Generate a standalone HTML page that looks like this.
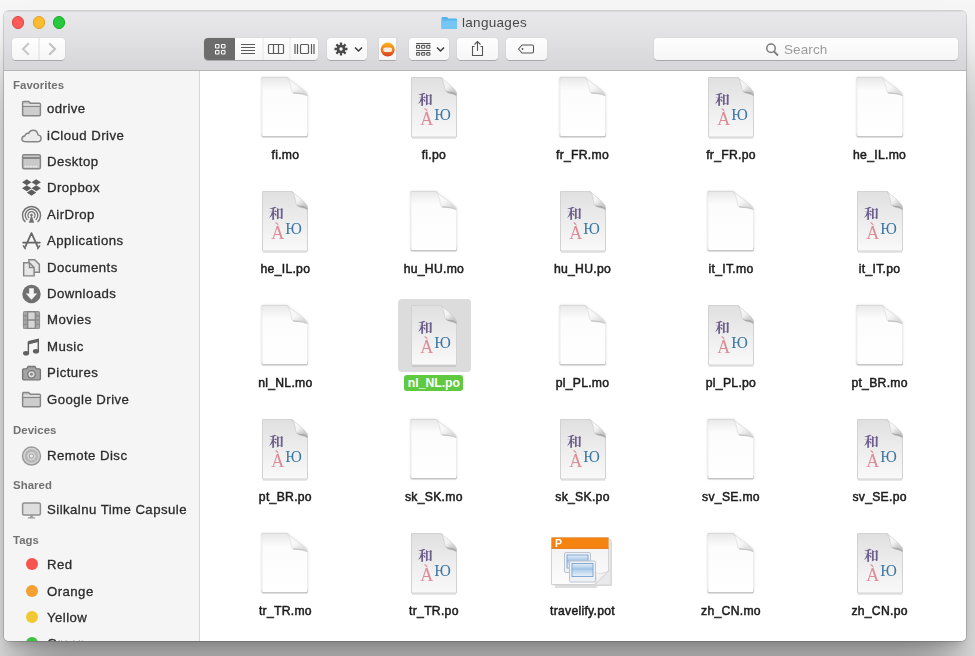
<!DOCTYPE html>
<html><head><meta charset="utf-8"><title>languages</title>
<style>
*{box-sizing:border-box;margin:0;padding:0}
html,body{width:975px;height:656px;overflow:hidden}
body{background:#f6f6f6;font-family:"Liberation Sans","Noto Sans CJK SC",sans-serif;position:relative;color:#2a2a2a}
#shade{position:absolute;left:0;top:0;width:975px;height:656px;background:#f6f6f6}
#win{position:absolute;left:4px;top:11px;width:962px;height:630px;border-radius:5px;background:#fff;transform:translateZ(0);box-shadow:0 0 0 1px rgba(0,0,0,.15),0 8px 10px -4px rgba(0,0,0,.17),0 55px 60px rgba(0,0,0,.38);overflow:hidden}
#tb{position:absolute;left:0;top:0;width:962px;height:60px;background:linear-gradient(#e8e7e9,#e1e0e2 45%,#d6d5d7);border-bottom:1px solid #b6b6b6;box-shadow:inset 0 1px 0 rgba(0,0,0,.06)}
.tl{position:absolute;top:5px;width:12.6px;height:12.6px;border-radius:50%}
#title{position:absolute;left:458px;top:4px;height:16px;font-size:13.5px;line-height:16px;color:#484848;letter-spacing:.3px}
.btn{position:absolute;top:27px;height:22px;background:linear-gradient(#fefefe,#f6f6f6);border-radius:4px;box-shadow:0 1px .5px rgba(0,0,0,.2),0 0 0 .5px rgba(0,0,0,.05)}
.btn svg{position:absolute;left:0;top:0}
#side{position:absolute;left:0;top:60px;width:196px;height:570px;background:#f5f5f5;border-right:1px solid #d6d6d6}
.sh{position:absolute;left:9px;font-size:11.4px;font-weight:bold;color:#717171;line-height:14px;letter-spacing:.05px}
.si{position:absolute;left:43px;font-size:13.2px;line-height:18px;color:#2c2c2c;white-space:nowrap;letter-spacing:.45px;-webkit-text-stroke:.3px #2c2c2c}
.sic{position:absolute;left:16px;width:23px;height:21px}
.dot{position:absolute;left:22px;width:12px;height:12px;border-radius:50%}
#main{position:absolute;left:197px;top:60px;width:765px;height:570px;background:#fff}
.it{position:absolute;width:120px;height:100px}
.ic{position:absolute;left:0;top:0;width:120px;height:70px}
.doc{position:absolute;left:32px;top:-3px}
.bl{filter:drop-shadow(0 .5px 1.2px rgba(0,0,0,.13))}
.pot{position:absolute;left:27px;top:2px}
.lb{position:absolute;left:-20px;width:160px;top:71px;text-align:center;font-size:12.2px;line-height:16px;color:#1c1c1c;white-space:nowrap;letter-spacing:.28px}
.lb span{padding:0 3px;border-radius:3px;display:inline-block;-webkit-text-stroke:.5px #1c1c1c}
.sel .ic:before{content:"";position:absolute;left:24px;top:-5px;width:73px;height:73px;background:#dcdcdc;border-radius:4px}
.sel .lb span{background:#5fc93f;color:#fff;font-weight:bold;-webkit-text-stroke:0;letter-spacing:0;padding:0 3.5px}
</style></head><body>
<div id="shade"></div>
<div id="win">
 <div id="tb">
  <div class="tl" style="left:7.5px;background:#fc5b57;border:.5px solid #e0443e"></div>
  <div class="tl" style="left:28.5px;background:#fdbc2e;border:.5px solid #dea123"></div>
  <div class="tl" style="left:48.5px;background:#27c93f;border:.5px solid #1aab29"></div>
  <svg width="17" height="14" viewBox="0 0 17 14" style="position:absolute;left:437px;top:5px"><path d="M.5 2 Q.5 1 1.5 1 H6 L7.5 2.5 H15 Q16 2.5 16 3.5 V12 Q16 13 15 13 H1.5 Q.5 13 .5 12Z" fill="#55b4ec"/><path d="M.5 4.5 H16 V12 Q16 13 15 13 H1.5 Q.5 13 .5 12Z" fill="#74c6f5"/></svg><div id="title">languages</div>
  <!-- back/forward -->
  <div class="btn" style="left:8px;width:53px"><svg width="53" height="22"><path d="M27 0V22" stroke="#dcdcdc" stroke-width="1"/><path d="M16.8 5.2 L11 11 L16.8 16.8" fill="none" stroke="#c6c6c6" stroke-width="2"/><path d="M37.2 5.2 L43 11 L37.2 16.8" fill="none" stroke="#c0c0c0" stroke-width="2"/></svg></div>
  <!-- view buttons -->
  <div class="btn" style="left:200px;width:114px"><svg width="114" height="22">
   <path d="M4 0 H31 V22 H4 Q0 22 0 18 V4 Q0 0 4 0Z" fill="#6c6c6c"/>
   <g fill="none" stroke="#fff" stroke-width="1.1"><rect x="11.5" y="6.5" width="3.5" height="3.5" rx=".8"/><rect x="17.5" y="6.5" width="3.5" height="3.5" rx=".8"/><rect x="11.5" y="12.5" width="3.5" height="3.5" rx=".8"/><rect x="17.5" y="12.5" width="3.5" height="3.5" rx=".8"/></g>
   <path d="M59 0V22M86 0V22" stroke="#e6e6e6" stroke-width="1"/>
   <g stroke="#5a5a5a" stroke-width="1.1"><path d="M37 6.5H51M37 9.5H51M37 12.5H51M37 15.5H51"/></g>
   <g fill="none" stroke="#5a5a5a" stroke-width="1.2"><rect x="64.5" y="6.5" width="15" height="9" rx="1"/><path d="M69.5 6.5V15.5M74.5 6.5V15.5"/></g>
   <g fill="none" stroke="#5a5a5a" stroke-width="1.2"><rect x="96.5" y="6.5" width="8" height="9" rx="1"/><path d="M91 6V16M93.5 6V16M107.5 6V16M110 6V16"/></g>
  </svg></div>
  <!-- gear -->
  <div class="btn" style="left:323px;width:40px"><svg width="40" height="22">
   <g transform="translate(14,11)" fill="#4a4a4a"><circle r="4.3"/><g stroke="#4a4a4a" stroke-width="2.3"><path d="M0-6.5V6.5M-6.5 0H6.5M-4.6-4.6L4.6 4.6M-4.6 4.6L4.6-4.6"/></g><circle r="1.7" fill="#fafafa"/></g>
   <path d="M28 9.5 L31.5 13 L35 9.5" fill="none" stroke="#3c3c3c" stroke-width="1.5"/>
  </svg></div>
  <!-- orange -->
  <div class="btn" style="left:375px;width:17px;border-radius:1px"><svg width="17" height="22"><defs><linearGradient id="og" x1="0" y1="0" x2="0" y2="1"><stop offset="0" stop-color="#f7b51f"/><stop offset=".5" stop-color="#ee7d1c"/><stop offset="1" stop-color="#d63e1b"/></linearGradient></defs><circle cx="8.7" cy="11.6" r="7" fill="url(#og)"/><rect x="4.2" y="9.4" width="9" height="4.6" rx="2.2" fill="#fbeee0"/></svg></div>
  <!-- arrange -->
  <div class="btn" style="left:405px;width:40px"><svg width="40" height="22">
   <g fill="none" stroke="#555" stroke-width="1.1"><path d="M7 5.5H21.5M7 12.5H21.5"/><rect x="7.5" y="7.4" width="3.2" height="2.8" rx=".7"/><rect x="12.6" y="7.4" width="3.2" height="2.8" rx=".7"/><rect x="17.7" y="7.4" width="3.2" height="2.8" rx=".7"/><rect x="7.5" y="14.6" width="3.2" height="2.6" rx=".7"/><rect x="12.6" y="14.6" width="3.2" height="2.6" rx=".7"/><rect x="17.7" y="14.6" width="3.2" height="2.6" rx=".7"/></g>
   <path d="M28 9.5 L31.5 13 L35 9.5" fill="none" stroke="#3c3c3c" stroke-width="1.5"/>
  </svg></div>
  <!-- share -->
  <div class="btn" style="left:453px;width:41px"><svg width="41" height="22"><g fill="none" stroke="#555" stroke-width="1.1"><path d="M17.5 8.5H15.5V17.5H25.5V8.5H23.5"/><path d="M20.5 13V3.5M17.5 6.5L20.5 3.5L23.5 6.5"/></g></svg></div>
  <!-- tag -->
  <div class="btn" style="left:502px;width:41px"><svg width="41" height="22"><path d="M12.5 11 L16 7 H26 Q27.5 7 27.5 8.5 V13.5 Q27.5 15 26 15 H16 Z" fill="none" stroke="#555" stroke-width="1.1" stroke-linejoin="round"/><circle cx="16.5" cy="11" r=".9" fill="#555"/></svg></div>
  <!-- search -->
  <div class="btn" style="left:650px;width:304px"><svg width="304" height="22"><circle cx="117" cy="10.3" r="4.2" fill="none" stroke="#7c7c7c" stroke-width="1.5"/><path d="M120 13.5L124 17.5" stroke="#7c7c7c" stroke-width="1.8"/></svg><span style="position:absolute;left:130px;top:4px;font-size:13.5px;line-height:16px;color:#9c9c9c;letter-spacing:.1px">Search</span></div>
 </div>

 <div id="side">
<div class="sh" style="top:6.5px">Favorites</div>
<svg class="sic" style="top:27.1px" viewBox="0 0 22 20"><path d="M2.5 4.3 Q2.5 3.3 3.5 3.3 H8.3 L10 5 H18.5 Q19.5 5 19.5 6 V16 Q19.5 17 18.5 17 H3.5 Q2.5 17 2.5 16Z" fill="#cdcdcd" stroke="#868686" stroke-width="1.4"/><path d="M2.5 8H19.5" stroke="#868686" stroke-width="1.3"/><path d="M3.3 5.8H18.7V7.3H3.3Z" fill="#e0e0e0"/></svg><div class="si" style="top:29.1px">odrive</div>
<svg class="sic" style="top:53.5px" viewBox="0 0 22 20"><path d="M6.5 16 H16.5 Q20.2 16 20.2 12.6 Q20.2 9.7 17.2 9.4 Q16.6 5 12.5 5 Q9.4 5 8.2 8 Q5.4 7.6 4.8 10.2 Q1.8 10.8 1.8 13.3 Q1.8 16 6.5 16Z" fill="#ececec" stroke="#868686" stroke-width="1.4"/></svg><div class="si" style="top:55.5px">iCloud Drive</div>
<svg class="sic" style="top:79.9px" viewBox="0 0 22 20"><rect x="2.5" y="3.6" width="17" height="13.4" rx="1.4" fill="#c9c9c9" stroke="#868686" stroke-width="1.4"/><path d="M2.5 6.6H19.5" stroke="#868686" stroke-width="2"/><path d="M4.5 14.8H17.5" stroke="#f0f0f0" stroke-width="1.4" stroke-dasharray="1.6 1"/></svg><div class="si" style="top:81.9px">Desktop</div>
<svg class="sic" style="top:106.3px" viewBox="0 0 22 20"><g fill="#5c5c5c"><path d="M6.5 2 L11 4.9 L6.5 7.8 L2 4.9Z"/><path d="M15.5 2 L20 4.9 L15.5 7.8 L11 4.9Z"/><path d="M6.5 7.8 L11 10.7 L6.5 13.6 L2 10.7Z"/><path d="M15.5 7.8 L20 10.7 L15.5 13.6 L11 10.7Z"/><path d="M6.5 14.9 L11 12 L15.5 14.9 L11 17.8Z"/></g></svg><div class="si" style="top:108.3px">Dropbox</div>
<svg class="sic" style="top:132.7px" viewBox="0 0 22 20"><g fill="none" stroke="#737373"><path d="M5.2 17.2 A8.6 8.6 0 1 1 16.8 17.2" stroke-width="1.4"/><path d="M7 15.2 A6 6 0 1 1 15 15.2" stroke-width="1.3"/><path d="M8.8 13.3 A3.4 3.4 0 1 1 13.2 13.3" stroke-width="1.2"/></g><path d="M11 10.2 L13.6 17.8 H8.4Z" fill="#737373"/><circle cx="11" cy="10.5" r="1.3" fill="#737373"/></svg><div class="si" style="top:134.7px">AirDrop</div>
<svg class="sic" style="top:159.1px" viewBox="0 0 22 20"><g fill="none" stroke="#666" stroke-width="1.7" stroke-linecap="round"><path d="M11 3 L5 16M11 3 L17 16M3 12 H19"/><path d="M3.2 15.2 L5 17.8M18.8 15.2 L17 17.8" stroke-width="1.4"/></g></svg><div class="si" style="top:161.1px">Applications</div>
<svg class="sic" style="top:185.5px" viewBox="0 0 22 20"><g fill="#e6e6e6" stroke="#868686" stroke-width="1.4"><path d="M8.5 2.5 H14 L18.5 7 V14.5 H8.5Z"/><path d="M3.5 5.5 H9 L13.5 10 V18 H3.5Z"/><path d="M9 5.5 V10 H13.5" fill="none" stroke-width="1.2"/></g></svg><div class="si" style="top:187.5px">Documents</div>
<svg class="sic" style="top:211.9px" viewBox="0 0 22 20"><circle cx="11" cy="10.5" r="8.8" fill="#707070"/><path d="M8.8 5 H13.2 V10 H16.5 L11 16 L5.5 10 H8.8Z" fill="#f5f5f5"/></svg><div class="si" style="top:213.9px">Downloads</div>
<svg class="sic" style="top:238.3px" viewBox="0 0 22 20"><rect x="3.5" y="2.5" width="15" height="16" rx="1.2" fill="#d6d6d6" stroke="#868686" stroke-width="1.4"/><path d="M3.5 2.5H7.3V18.5H3.5ZM14.7 2.5H18.5V18.5H14.7Z" fill="#a6a6a6"/><path d="M7.3 2.5V18.5M14.7 2.5V18.5M7.3 10.5H14.7" stroke="#868686" stroke-width="1.3" fill="none"/><path d="M3.5 6.5H7.3M3.5 10.5H7.3M3.5 14.5H7.3M14.7 6.5H18.5M14.7 10.5H18.5M14.7 14.5H18.5" stroke="#868686" stroke-width="1.1" fill="none"/></svg><div class="si" style="top:240.3px">Movies</div>
<svg class="sic" style="top:264.7px" viewBox="0 0 22 20"><path d="M8 5.5 L17.5 3.3 V14.5" fill="none" stroke="#606060" stroke-width="1.4"/><path d="M8 5.5 V16.5" fill="none" stroke="#606060" stroke-width="1.4"/><path d="M8 5.2 L17.5 3 V5.8 L8 8Z" fill="#606060"/><ellipse cx="5.8" cy="16.5" rx="2.9" ry="2.2" fill="#606060"/><ellipse cx="15.3" cy="14.5" rx="2.9" ry="2.2" fill="#606060"/></svg><div class="si" style="top:266.7px">Music</div>
<svg class="sic" style="top:291.1px" viewBox="0 0 22 20"><path d="M3.5 6.5 H6.3 L7.8 4.3 H14.2 L15.7 6.5 H18.5 Q19.5 6.5 19.5 7.5 V16 Q19.5 17 18.5 17 H3.5 Q2.5 17 2.5 16 V7.5 Q2.5 6.5 3.5 6.5Z" fill="#a4a4a4" stroke="#767676" stroke-width="1.3"/><circle cx="11" cy="11.7" r="3.6" fill="#dedede" stroke="#767676" stroke-width="1.2"/><circle cx="11" cy="11.7" r="1.4" fill="#8a8a8a"/></svg><div class="si" style="top:293.1px">Pictures</div>
<svg class="sic" style="top:317.5px" viewBox="0 0 22 20"><path d="M2.5 4.3 Q2.5 3.3 3.5 3.3 H8.3 L10 5 H18.5 Q19.5 5 19.5 6 V16 Q19.5 17 18.5 17 H3.5 Q2.5 17 2.5 16Z" fill="#cdcdcd" stroke="#868686" stroke-width="1.4"/><path d="M2.5 8H19.5" stroke="#868686" stroke-width="1.3"/><path d="M3.3 5.8H18.7V7.3H3.3Z" fill="#e0e0e0"/></svg><div class="si" style="top:319.5px">Google Drive</div>
<div class="sh" style="top:352.2px">Devices</div>
<svg class="sic" style="top:373.7px" viewBox="0 0 22 20"><circle cx="11" cy="10.5" r="8.6" fill="#d4d4d4" stroke="#999" stroke-width="1.4"/><circle cx="11" cy="10.5" r="5.3" fill="none" stroke="#b4b4b4" stroke-width="2.2"/><circle cx="11" cy="10.5" r="2" fill="#f2f2f2" stroke="#a8a8a8" stroke-width="1"/></svg><div class="si" style="top:375.7px">Remote Disc</div>
<div class="sh" style="top:407.1px">Shared</div>
<svg class="sic" style="top:428.1px" viewBox="0 0 22 20"><rect x="2.5" y="3.8" width="17" height="11.4" rx="1.4" fill="#dedede" stroke="#8e8e8e" stroke-width="1.4"/><path d="M7.5 18 H14.5" stroke="#9a9a9a" stroke-width="1.3"/><path d="M11 15.2 V18" stroke="#9a9a9a" stroke-width="2.5"/></svg><div class="si" style="top:430.1px">Silkalnu Time Capsule</div>
<div class="sh" style="top:462.0px">Tags</div>
<div class="dot" style="top:487.0px;background:#f7544d"></div><div class="si" style="top:485.0px">Red</div>
<div class="dot" style="top:513.5px;background:#f5a032"></div><div class="si" style="top:511.5px">Orange</div>
<div class="dot" style="top:539.9px;background:#f2c832"></div><div class="si" style="top:537.9px">Yellow</div>
<div class="dot" style="top:566.3px;background:#3ec343"></div><div class="si" style="top:564.3px">Green</div>
 </div>
 <div id="main"></div>
<div class="it" style="left:221.39999999999998px;top:65px"><div class="ic"><svg class="doc bl" width="56" height="70" viewBox="0 0 56 70"><defs><linearGradient id="gb0" x1="0" y1="0" x2="0" y2="1"><stop offset="0" stop-color="#e9e9e9"/><stop offset=".22" stop-color="#fcfcfc"/><stop offset="1" stop-color="#ffffff"/></linearGradient><linearGradient id="gs0" x1="0" y1="0" x2="0" y2="1"><stop offset="0" stop-color="#d8d8d8"/><stop offset=".12" stop-color="#eeeeee"/><stop offset=".93" stop-color="#ececec"/><stop offset="1" stop-color="#c6c6c6"/></linearGradient><linearGradient id="gf0" x1="0" y1="0" x2="1" y2="1"><stop offset="0" stop-color="#ffffff"/><stop offset=".5" stop-color="#f6f6f6"/><stop offset="1" stop-color="#cccccc"/></linearGradient></defs><path d="M5.5 64.3 H50" stroke="#000" stroke-opacity=".09" stroke-width="1.4"/><path d="M5 4.5 H29.5 C33.5 4.5 32.5 11 35 14.5 C38 18.5 50.5 16 50.5 22.5 V63.5 H5 Z" fill="url(#gb0)" stroke="url(#gs0)" stroke-width="1"/><path d="M29.5 4.5 C34.5 8 33.5 17 35.5 19.5 C38 21 46.5 18.5 50.5 22.5 C49 17 39.5 12.5 29.5 4.5 Z" fill="url(#gf0)" stroke="#d6d6d6" stroke-width=".6"/><path d="M36 19.8 C40 21 45.5 19.5 49.8 22.6" fill="none" stroke="#9a9a9a" stroke-opacity=".5" stroke-width="1.1"/></svg></div><div class="lb"><span>fi.mo</span></div></div>
<div class="it" style="left:369.9px;top:65px"><div class="ic"><svg class="doc" width="56" height="70" viewBox="0 0 56 70"><defs><linearGradient id="gb1" x1="0" y1="0" x2="0" y2="1"><stop offset="0" stop-color="#e0e0e0"/><stop offset=".5" stop-color="#ededed"/><stop offset="1" stop-color="#f9f9f9"/></linearGradient><linearGradient id="gf1" x1="0" y1="0" x2="1" y2="1"><stop offset="0" stop-color="#ffffff"/><stop offset=".5" stop-color="#f2f2f2"/><stop offset="1" stop-color="#b4b4b4"/></linearGradient></defs><path d="M6 65 H50" stroke="#000" stroke-opacity=".13" stroke-width="1.4"/><path d="M5.5 4.5 H34.5 C38 4.5 37 10.5 39 13.5 C41.5 17 50.5 15 50.5 20.5 V64 H5.5 Z" fill="url(#gb1)" stroke="#d2d2d2" stroke-width="1"/><path d="M34.5 4.5 C39 8 37.8 15.5 39.5 17.8 C42 19 47.5 17 50.5 20.5 C49 15.5 44 11.5 34.5 4.5 Z" fill="url(#gf1)" stroke="#c8c8c8" stroke-width=".6"/><path d="M39.5 18.2 C43 19.5 47.5 17.4 50.4 20.9 L50.4 23 C47.5 20.2 43 21.6 39.5 18.2Z" fill="#6e6e6e" opacity=".5"/><text transform="translate(12,31.3) scale(1.17,1)" font-family="'Liberation Serif','Noto Serif CJK SC',serif" font-weight="bold" font-size="12.8" fill="#6d5e8c">和</text><text x="14.2" y="52" font-family="'Liberation Serif',serif" font-size="18" fill="#db8c97">À</text><text x="28.3" y="46.8" font-family="'Liberation Serif',serif" font-size="16.2" fill="#3c78a6">Ю</text></svg></div><div class="lb"><span>fi.po</span></div></div>
<div class="it" style="left:518.5px;top:65px"><div class="ic"><svg class="doc bl" width="56" height="70" viewBox="0 0 56 70"><defs><linearGradient id="gb2" x1="0" y1="0" x2="0" y2="1"><stop offset="0" stop-color="#e9e9e9"/><stop offset=".22" stop-color="#fcfcfc"/><stop offset="1" stop-color="#ffffff"/></linearGradient><linearGradient id="gs2" x1="0" y1="0" x2="0" y2="1"><stop offset="0" stop-color="#d8d8d8"/><stop offset=".12" stop-color="#eeeeee"/><stop offset=".93" stop-color="#ececec"/><stop offset="1" stop-color="#c6c6c6"/></linearGradient><linearGradient id="gf2" x1="0" y1="0" x2="1" y2="1"><stop offset="0" stop-color="#ffffff"/><stop offset=".5" stop-color="#f6f6f6"/><stop offset="1" stop-color="#cccccc"/></linearGradient></defs><path d="M5.5 64.3 H50" stroke="#000" stroke-opacity=".09" stroke-width="1.4"/><path d="M5 4.5 H29.5 C33.5 4.5 32.5 11 35 14.5 C38 18.5 50.5 16 50.5 22.5 V63.5 H5 Z" fill="url(#gb2)" stroke="url(#gs2)" stroke-width="1"/><path d="M29.5 4.5 C34.5 8 33.5 17 35.5 19.5 C38 21 46.5 18.5 50.5 22.5 C49 17 39.5 12.5 29.5 4.5 Z" fill="url(#gf2)" stroke="#d6d6d6" stroke-width=".6"/><path d="M36 19.8 C40 21 45.5 19.5 49.8 22.6" fill="none" stroke="#9a9a9a" stroke-opacity=".5" stroke-width="1.1"/></svg></div><div class="lb"><span>fr_FR.mo</span></div></div>
<div class="it" style="left:667px;top:65px"><div class="ic"><svg class="doc" width="56" height="70" viewBox="0 0 56 70"><defs><linearGradient id="gb3" x1="0" y1="0" x2="0" y2="1"><stop offset="0" stop-color="#e0e0e0"/><stop offset=".5" stop-color="#ededed"/><stop offset="1" stop-color="#f9f9f9"/></linearGradient><linearGradient id="gf3" x1="0" y1="0" x2="1" y2="1"><stop offset="0" stop-color="#ffffff"/><stop offset=".5" stop-color="#f2f2f2"/><stop offset="1" stop-color="#b4b4b4"/></linearGradient></defs><path d="M6 65 H50" stroke="#000" stroke-opacity=".13" stroke-width="1.4"/><path d="M5.5 4.5 H34.5 C38 4.5 37 10.5 39 13.5 C41.5 17 50.5 15 50.5 20.5 V64 H5.5 Z" fill="url(#gb3)" stroke="#d2d2d2" stroke-width="1"/><path d="M34.5 4.5 C39 8 37.8 15.5 39.5 17.8 C42 19 47.5 17 50.5 20.5 C49 15.5 44 11.5 34.5 4.5 Z" fill="url(#gf3)" stroke="#c8c8c8" stroke-width=".6"/><path d="M39.5 18.2 C43 19.5 47.5 17.4 50.4 20.9 L50.4 23 C47.5 20.2 43 21.6 39.5 18.2Z" fill="#6e6e6e" opacity=".5"/><text transform="translate(12,31.3) scale(1.17,1)" font-family="'Liberation Serif','Noto Serif CJK SC',serif" font-weight="bold" font-size="12.8" fill="#6d5e8c">和</text><text x="14.2" y="52" font-family="'Liberation Serif',serif" font-size="18" fill="#db8c97">À</text><text x="28.3" y="46.8" font-family="'Liberation Serif',serif" font-size="16.2" fill="#3c78a6">Ю</text></svg></div><div class="lb"><span>fr_FR.po</span></div></div>
<div class="it" style="left:815.6px;top:65px"><div class="ic"><svg class="doc bl" width="56" height="70" viewBox="0 0 56 70"><defs><linearGradient id="gb4" x1="0" y1="0" x2="0" y2="1"><stop offset="0" stop-color="#e9e9e9"/><stop offset=".22" stop-color="#fcfcfc"/><stop offset="1" stop-color="#ffffff"/></linearGradient><linearGradient id="gs4" x1="0" y1="0" x2="0" y2="1"><stop offset="0" stop-color="#d8d8d8"/><stop offset=".12" stop-color="#eeeeee"/><stop offset=".93" stop-color="#ececec"/><stop offset="1" stop-color="#c6c6c6"/></linearGradient><linearGradient id="gf4" x1="0" y1="0" x2="1" y2="1"><stop offset="0" stop-color="#ffffff"/><stop offset=".5" stop-color="#f6f6f6"/><stop offset="1" stop-color="#cccccc"/></linearGradient></defs><path d="M5.5 64.3 H50" stroke="#000" stroke-opacity=".09" stroke-width="1.4"/><path d="M5 4.5 H29.5 C33.5 4.5 32.5 11 35 14.5 C38 18.5 50.5 16 50.5 22.5 V63.5 H5 Z" fill="url(#gb4)" stroke="url(#gs4)" stroke-width="1"/><path d="M29.5 4.5 C34.5 8 33.5 17 35.5 19.5 C38 21 46.5 18.5 50.5 22.5 C49 17 39.5 12.5 29.5 4.5 Z" fill="url(#gf4)" stroke="#d6d6d6" stroke-width=".6"/><path d="M36 19.8 C40 21 45.5 19.5 49.8 22.6" fill="none" stroke="#9a9a9a" stroke-opacity=".5" stroke-width="1.1"/></svg></div><div class="lb"><span>he_IL.mo</span></div></div>
<div class="it" style="left:221.39999999999998px;top:179px"><div class="ic"><svg class="doc" width="56" height="70" viewBox="0 0 56 70"><defs><linearGradient id="gb5" x1="0" y1="0" x2="0" y2="1"><stop offset="0" stop-color="#e0e0e0"/><stop offset=".5" stop-color="#ededed"/><stop offset="1" stop-color="#f9f9f9"/></linearGradient><linearGradient id="gf5" x1="0" y1="0" x2="1" y2="1"><stop offset="0" stop-color="#ffffff"/><stop offset=".5" stop-color="#f2f2f2"/><stop offset="1" stop-color="#b4b4b4"/></linearGradient></defs><path d="M6 65 H50" stroke="#000" stroke-opacity=".13" stroke-width="1.4"/><path d="M5.5 4.5 H34.5 C38 4.5 37 10.5 39 13.5 C41.5 17 50.5 15 50.5 20.5 V64 H5.5 Z" fill="url(#gb5)" stroke="#d2d2d2" stroke-width="1"/><path d="M34.5 4.5 C39 8 37.8 15.5 39.5 17.8 C42 19 47.5 17 50.5 20.5 C49 15.5 44 11.5 34.5 4.5 Z" fill="url(#gf5)" stroke="#c8c8c8" stroke-width=".6"/><path d="M39.5 18.2 C43 19.5 47.5 17.4 50.4 20.9 L50.4 23 C47.5 20.2 43 21.6 39.5 18.2Z" fill="#6e6e6e" opacity=".5"/><text transform="translate(12,31.3) scale(1.17,1)" font-family="'Liberation Serif','Noto Serif CJK SC',serif" font-weight="bold" font-size="12.8" fill="#6d5e8c">和</text><text x="14.2" y="52" font-family="'Liberation Serif',serif" font-size="18" fill="#db8c97">À</text><text x="28.3" y="46.8" font-family="'Liberation Serif',serif" font-size="16.2" fill="#3c78a6">Ю</text></svg></div><div class="lb"><span>he_IL.po</span></div></div>
<div class="it" style="left:369.9px;top:179px"><div class="ic"><svg class="doc bl" width="56" height="70" viewBox="0 0 56 70"><defs><linearGradient id="gb6" x1="0" y1="0" x2="0" y2="1"><stop offset="0" stop-color="#e9e9e9"/><stop offset=".22" stop-color="#fcfcfc"/><stop offset="1" stop-color="#ffffff"/></linearGradient><linearGradient id="gs6" x1="0" y1="0" x2="0" y2="1"><stop offset="0" stop-color="#d8d8d8"/><stop offset=".12" stop-color="#eeeeee"/><stop offset=".93" stop-color="#ececec"/><stop offset="1" stop-color="#c6c6c6"/></linearGradient><linearGradient id="gf6" x1="0" y1="0" x2="1" y2="1"><stop offset="0" stop-color="#ffffff"/><stop offset=".5" stop-color="#f6f6f6"/><stop offset="1" stop-color="#cccccc"/></linearGradient></defs><path d="M5.5 64.3 H50" stroke="#000" stroke-opacity=".09" stroke-width="1.4"/><path d="M5 4.5 H29.5 C33.5 4.5 32.5 11 35 14.5 C38 18.5 50.5 16 50.5 22.5 V63.5 H5 Z" fill="url(#gb6)" stroke="url(#gs6)" stroke-width="1"/><path d="M29.5 4.5 C34.5 8 33.5 17 35.5 19.5 C38 21 46.5 18.5 50.5 22.5 C49 17 39.5 12.5 29.5 4.5 Z" fill="url(#gf6)" stroke="#d6d6d6" stroke-width=".6"/><path d="M36 19.8 C40 21 45.5 19.5 49.8 22.6" fill="none" stroke="#9a9a9a" stroke-opacity=".5" stroke-width="1.1"/></svg></div><div class="lb"><span>hu_HU.mo</span></div></div>
<div class="it" style="left:518.5px;top:179px"><div class="ic"><svg class="doc" width="56" height="70" viewBox="0 0 56 70"><defs><linearGradient id="gb7" x1="0" y1="0" x2="0" y2="1"><stop offset="0" stop-color="#e0e0e0"/><stop offset=".5" stop-color="#ededed"/><stop offset="1" stop-color="#f9f9f9"/></linearGradient><linearGradient id="gf7" x1="0" y1="0" x2="1" y2="1"><stop offset="0" stop-color="#ffffff"/><stop offset=".5" stop-color="#f2f2f2"/><stop offset="1" stop-color="#b4b4b4"/></linearGradient></defs><path d="M6 65 H50" stroke="#000" stroke-opacity=".13" stroke-width="1.4"/><path d="M5.5 4.5 H34.5 C38 4.5 37 10.5 39 13.5 C41.5 17 50.5 15 50.5 20.5 V64 H5.5 Z" fill="url(#gb7)" stroke="#d2d2d2" stroke-width="1"/><path d="M34.5 4.5 C39 8 37.8 15.5 39.5 17.8 C42 19 47.5 17 50.5 20.5 C49 15.5 44 11.5 34.5 4.5 Z" fill="url(#gf7)" stroke="#c8c8c8" stroke-width=".6"/><path d="M39.5 18.2 C43 19.5 47.5 17.4 50.4 20.9 L50.4 23 C47.5 20.2 43 21.6 39.5 18.2Z" fill="#6e6e6e" opacity=".5"/><text transform="translate(12,31.3) scale(1.17,1)" font-family="'Liberation Serif','Noto Serif CJK SC',serif" font-weight="bold" font-size="12.8" fill="#6d5e8c">和</text><text x="14.2" y="52" font-family="'Liberation Serif',serif" font-size="18" fill="#db8c97">À</text><text x="28.3" y="46.8" font-family="'Liberation Serif',serif" font-size="16.2" fill="#3c78a6">Ю</text></svg></div><div class="lb"><span>hu_HU.po</span></div></div>
<div class="it" style="left:667px;top:179px"><div class="ic"><svg class="doc bl" width="56" height="70" viewBox="0 0 56 70"><defs><linearGradient id="gb8" x1="0" y1="0" x2="0" y2="1"><stop offset="0" stop-color="#e9e9e9"/><stop offset=".22" stop-color="#fcfcfc"/><stop offset="1" stop-color="#ffffff"/></linearGradient><linearGradient id="gs8" x1="0" y1="0" x2="0" y2="1"><stop offset="0" stop-color="#d8d8d8"/><stop offset=".12" stop-color="#eeeeee"/><stop offset=".93" stop-color="#ececec"/><stop offset="1" stop-color="#c6c6c6"/></linearGradient><linearGradient id="gf8" x1="0" y1="0" x2="1" y2="1"><stop offset="0" stop-color="#ffffff"/><stop offset=".5" stop-color="#f6f6f6"/><stop offset="1" stop-color="#cccccc"/></linearGradient></defs><path d="M5.5 64.3 H50" stroke="#000" stroke-opacity=".09" stroke-width="1.4"/><path d="M5 4.5 H29.5 C33.5 4.5 32.5 11 35 14.5 C38 18.5 50.5 16 50.5 22.5 V63.5 H5 Z" fill="url(#gb8)" stroke="url(#gs8)" stroke-width="1"/><path d="M29.5 4.5 C34.5 8 33.5 17 35.5 19.5 C38 21 46.5 18.5 50.5 22.5 C49 17 39.5 12.5 29.5 4.5 Z" fill="url(#gf8)" stroke="#d6d6d6" stroke-width=".6"/><path d="M36 19.8 C40 21 45.5 19.5 49.8 22.6" fill="none" stroke="#9a9a9a" stroke-opacity=".5" stroke-width="1.1"/></svg></div><div class="lb"><span>it_IT.mo</span></div></div>
<div class="it" style="left:815.6px;top:179px"><div class="ic"><svg class="doc" width="56" height="70" viewBox="0 0 56 70"><defs><linearGradient id="gb9" x1="0" y1="0" x2="0" y2="1"><stop offset="0" stop-color="#e0e0e0"/><stop offset=".5" stop-color="#ededed"/><stop offset="1" stop-color="#f9f9f9"/></linearGradient><linearGradient id="gf9" x1="0" y1="0" x2="1" y2="1"><stop offset="0" stop-color="#ffffff"/><stop offset=".5" stop-color="#f2f2f2"/><stop offset="1" stop-color="#b4b4b4"/></linearGradient></defs><path d="M6 65 H50" stroke="#000" stroke-opacity=".13" stroke-width="1.4"/><path d="M5.5 4.5 H34.5 C38 4.5 37 10.5 39 13.5 C41.5 17 50.5 15 50.5 20.5 V64 H5.5 Z" fill="url(#gb9)" stroke="#d2d2d2" stroke-width="1"/><path d="M34.5 4.5 C39 8 37.8 15.5 39.5 17.8 C42 19 47.5 17 50.5 20.5 C49 15.5 44 11.5 34.5 4.5 Z" fill="url(#gf9)" stroke="#c8c8c8" stroke-width=".6"/><path d="M39.5 18.2 C43 19.5 47.5 17.4 50.4 20.9 L50.4 23 C47.5 20.2 43 21.6 39.5 18.2Z" fill="#6e6e6e" opacity=".5"/><text transform="translate(12,31.3) scale(1.17,1)" font-family="'Liberation Serif','Noto Serif CJK SC',serif" font-weight="bold" font-size="12.8" fill="#6d5e8c">和</text><text x="14.2" y="52" font-family="'Liberation Serif',serif" font-size="18" fill="#db8c97">À</text><text x="28.3" y="46.8" font-family="'Liberation Serif',serif" font-size="16.2" fill="#3c78a6">Ю</text></svg></div><div class="lb"><span>it_IT.po</span></div></div>
<div class="it" style="left:221.39999999999998px;top:293px"><div class="ic"><svg class="doc bl" width="56" height="70" viewBox="0 0 56 70"><defs><linearGradient id="gb10" x1="0" y1="0" x2="0" y2="1"><stop offset="0" stop-color="#e9e9e9"/><stop offset=".22" stop-color="#fcfcfc"/><stop offset="1" stop-color="#ffffff"/></linearGradient><linearGradient id="gs10" x1="0" y1="0" x2="0" y2="1"><stop offset="0" stop-color="#d8d8d8"/><stop offset=".12" stop-color="#eeeeee"/><stop offset=".93" stop-color="#ececec"/><stop offset="1" stop-color="#c6c6c6"/></linearGradient><linearGradient id="gf10" x1="0" y1="0" x2="1" y2="1"><stop offset="0" stop-color="#ffffff"/><stop offset=".5" stop-color="#f6f6f6"/><stop offset="1" stop-color="#cccccc"/></linearGradient></defs><path d="M5.5 64.3 H50" stroke="#000" stroke-opacity=".09" stroke-width="1.4"/><path d="M5 4.5 H29.5 C33.5 4.5 32.5 11 35 14.5 C38 18.5 50.5 16 50.5 22.5 V63.5 H5 Z" fill="url(#gb10)" stroke="url(#gs10)" stroke-width="1"/><path d="M29.5 4.5 C34.5 8 33.5 17 35.5 19.5 C38 21 46.5 18.5 50.5 22.5 C49 17 39.5 12.5 29.5 4.5 Z" fill="url(#gf10)" stroke="#d6d6d6" stroke-width=".6"/><path d="M36 19.8 C40 21 45.5 19.5 49.8 22.6" fill="none" stroke="#9a9a9a" stroke-opacity=".5" stroke-width="1.1"/></svg></div><div class="lb"><span>nl_NL.mo</span></div></div>
<div class="it sel" style="left:369.9px;top:293px"><div class="ic"><svg class="doc" width="56" height="70" viewBox="0 0 56 70"><defs><linearGradient id="gb11" x1="0" y1="0" x2="0" y2="1"><stop offset="0" stop-color="#e0e0e0"/><stop offset=".5" stop-color="#ededed"/><stop offset="1" stop-color="#f9f9f9"/></linearGradient><linearGradient id="gf11" x1="0" y1="0" x2="1" y2="1"><stop offset="0" stop-color="#ffffff"/><stop offset=".5" stop-color="#f2f2f2"/><stop offset="1" stop-color="#b4b4b4"/></linearGradient></defs><path d="M6 65 H50" stroke="#000" stroke-opacity=".13" stroke-width="1.4"/><path d="M5.5 4.5 H34.5 C38 4.5 37 10.5 39 13.5 C41.5 17 50.5 15 50.5 20.5 V64 H5.5 Z" fill="url(#gb11)" stroke="#d2d2d2" stroke-width="1"/><path d="M34.5 4.5 C39 8 37.8 15.5 39.5 17.8 C42 19 47.5 17 50.5 20.5 C49 15.5 44 11.5 34.5 4.5 Z" fill="url(#gf11)" stroke="#c8c8c8" stroke-width=".6"/><path d="M39.5 18.2 C43 19.5 47.5 17.4 50.4 20.9 L50.4 23 C47.5 20.2 43 21.6 39.5 18.2Z" fill="#6e6e6e" opacity=".5"/><text transform="translate(12,31.3) scale(1.17,1)" font-family="'Liberation Serif','Noto Serif CJK SC',serif" font-weight="bold" font-size="12.8" fill="#6d5e8c">和</text><text x="14.2" y="52" font-family="'Liberation Serif',serif" font-size="18" fill="#db8c97">À</text><text x="28.3" y="46.8" font-family="'Liberation Serif',serif" font-size="16.2" fill="#3c78a6">Ю</text></svg></div><div class="lb"><span>nl_NL.po</span></div></div>
<div class="it" style="left:518.5px;top:293px"><div class="ic"><svg class="doc bl" width="56" height="70" viewBox="0 0 56 70"><defs><linearGradient id="gb12" x1="0" y1="0" x2="0" y2="1"><stop offset="0" stop-color="#e9e9e9"/><stop offset=".22" stop-color="#fcfcfc"/><stop offset="1" stop-color="#ffffff"/></linearGradient><linearGradient id="gs12" x1="0" y1="0" x2="0" y2="1"><stop offset="0" stop-color="#d8d8d8"/><stop offset=".12" stop-color="#eeeeee"/><stop offset=".93" stop-color="#ececec"/><stop offset="1" stop-color="#c6c6c6"/></linearGradient><linearGradient id="gf12" x1="0" y1="0" x2="1" y2="1"><stop offset="0" stop-color="#ffffff"/><stop offset=".5" stop-color="#f6f6f6"/><stop offset="1" stop-color="#cccccc"/></linearGradient></defs><path d="M5.5 64.3 H50" stroke="#000" stroke-opacity=".09" stroke-width="1.4"/><path d="M5 4.5 H29.5 C33.5 4.5 32.5 11 35 14.5 C38 18.5 50.5 16 50.5 22.5 V63.5 H5 Z" fill="url(#gb12)" stroke="url(#gs12)" stroke-width="1"/><path d="M29.5 4.5 C34.5 8 33.5 17 35.5 19.5 C38 21 46.5 18.5 50.5 22.5 C49 17 39.5 12.5 29.5 4.5 Z" fill="url(#gf12)" stroke="#d6d6d6" stroke-width=".6"/><path d="M36 19.8 C40 21 45.5 19.5 49.8 22.6" fill="none" stroke="#9a9a9a" stroke-opacity=".5" stroke-width="1.1"/></svg></div><div class="lb"><span>pl_PL.mo</span></div></div>
<div class="it" style="left:667px;top:293px"><div class="ic"><svg class="doc" width="56" height="70" viewBox="0 0 56 70"><defs><linearGradient id="gb13" x1="0" y1="0" x2="0" y2="1"><stop offset="0" stop-color="#e0e0e0"/><stop offset=".5" stop-color="#ededed"/><stop offset="1" stop-color="#f9f9f9"/></linearGradient><linearGradient id="gf13" x1="0" y1="0" x2="1" y2="1"><stop offset="0" stop-color="#ffffff"/><stop offset=".5" stop-color="#f2f2f2"/><stop offset="1" stop-color="#b4b4b4"/></linearGradient></defs><path d="M6 65 H50" stroke="#000" stroke-opacity=".13" stroke-width="1.4"/><path d="M5.5 4.5 H34.5 C38 4.5 37 10.5 39 13.5 C41.5 17 50.5 15 50.5 20.5 V64 H5.5 Z" fill="url(#gb13)" stroke="#d2d2d2" stroke-width="1"/><path d="M34.5 4.5 C39 8 37.8 15.5 39.5 17.8 C42 19 47.5 17 50.5 20.5 C49 15.5 44 11.5 34.5 4.5 Z" fill="url(#gf13)" stroke="#c8c8c8" stroke-width=".6"/><path d="M39.5 18.2 C43 19.5 47.5 17.4 50.4 20.9 L50.4 23 C47.5 20.2 43 21.6 39.5 18.2Z" fill="#6e6e6e" opacity=".5"/><text transform="translate(12,31.3) scale(1.17,1)" font-family="'Liberation Serif','Noto Serif CJK SC',serif" font-weight="bold" font-size="12.8" fill="#6d5e8c">和</text><text x="14.2" y="52" font-family="'Liberation Serif',serif" font-size="18" fill="#db8c97">À</text><text x="28.3" y="46.8" font-family="'Liberation Serif',serif" font-size="16.2" fill="#3c78a6">Ю</text></svg></div><div class="lb"><span>pl_PL.po</span></div></div>
<div class="it" style="left:815.6px;top:293px"><div class="ic"><svg class="doc bl" width="56" height="70" viewBox="0 0 56 70"><defs><linearGradient id="gb14" x1="0" y1="0" x2="0" y2="1"><stop offset="0" stop-color="#e9e9e9"/><stop offset=".22" stop-color="#fcfcfc"/><stop offset="1" stop-color="#ffffff"/></linearGradient><linearGradient id="gs14" x1="0" y1="0" x2="0" y2="1"><stop offset="0" stop-color="#d8d8d8"/><stop offset=".12" stop-color="#eeeeee"/><stop offset=".93" stop-color="#ececec"/><stop offset="1" stop-color="#c6c6c6"/></linearGradient><linearGradient id="gf14" x1="0" y1="0" x2="1" y2="1"><stop offset="0" stop-color="#ffffff"/><stop offset=".5" stop-color="#f6f6f6"/><stop offset="1" stop-color="#cccccc"/></linearGradient></defs><path d="M5.5 64.3 H50" stroke="#000" stroke-opacity=".09" stroke-width="1.4"/><path d="M5 4.5 H29.5 C33.5 4.5 32.5 11 35 14.5 C38 18.5 50.5 16 50.5 22.5 V63.5 H5 Z" fill="url(#gb14)" stroke="url(#gs14)" stroke-width="1"/><path d="M29.5 4.5 C34.5 8 33.5 17 35.5 19.5 C38 21 46.5 18.5 50.5 22.5 C49 17 39.5 12.5 29.5 4.5 Z" fill="url(#gf14)" stroke="#d6d6d6" stroke-width=".6"/><path d="M36 19.8 C40 21 45.5 19.5 49.8 22.6" fill="none" stroke="#9a9a9a" stroke-opacity=".5" stroke-width="1.1"/></svg></div><div class="lb"><span>pt_BR.mo</span></div></div>
<div class="it" style="left:221.39999999999998px;top:407px"><div class="ic"><svg class="doc" width="56" height="70" viewBox="0 0 56 70"><defs><linearGradient id="gb15" x1="0" y1="0" x2="0" y2="1"><stop offset="0" stop-color="#e0e0e0"/><stop offset=".5" stop-color="#ededed"/><stop offset="1" stop-color="#f9f9f9"/></linearGradient><linearGradient id="gf15" x1="0" y1="0" x2="1" y2="1"><stop offset="0" stop-color="#ffffff"/><stop offset=".5" stop-color="#f2f2f2"/><stop offset="1" stop-color="#b4b4b4"/></linearGradient></defs><path d="M6 65 H50" stroke="#000" stroke-opacity=".13" stroke-width="1.4"/><path d="M5.5 4.5 H34.5 C38 4.5 37 10.5 39 13.5 C41.5 17 50.5 15 50.5 20.5 V64 H5.5 Z" fill="url(#gb15)" stroke="#d2d2d2" stroke-width="1"/><path d="M34.5 4.5 C39 8 37.8 15.5 39.5 17.8 C42 19 47.5 17 50.5 20.5 C49 15.5 44 11.5 34.5 4.5 Z" fill="url(#gf15)" stroke="#c8c8c8" stroke-width=".6"/><path d="M39.5 18.2 C43 19.5 47.5 17.4 50.4 20.9 L50.4 23 C47.5 20.2 43 21.6 39.5 18.2Z" fill="#6e6e6e" opacity=".5"/><text transform="translate(12,31.3) scale(1.17,1)" font-family="'Liberation Serif','Noto Serif CJK SC',serif" font-weight="bold" font-size="12.8" fill="#6d5e8c">和</text><text x="14.2" y="52" font-family="'Liberation Serif',serif" font-size="18" fill="#db8c97">À</text><text x="28.3" y="46.8" font-family="'Liberation Serif',serif" font-size="16.2" fill="#3c78a6">Ю</text></svg></div><div class="lb"><span>pt_BR.po</span></div></div>
<div class="it" style="left:369.9px;top:407px"><div class="ic"><svg class="doc bl" width="56" height="70" viewBox="0 0 56 70"><defs><linearGradient id="gb16" x1="0" y1="0" x2="0" y2="1"><stop offset="0" stop-color="#e9e9e9"/><stop offset=".22" stop-color="#fcfcfc"/><stop offset="1" stop-color="#ffffff"/></linearGradient><linearGradient id="gs16" x1="0" y1="0" x2="0" y2="1"><stop offset="0" stop-color="#d8d8d8"/><stop offset=".12" stop-color="#eeeeee"/><stop offset=".93" stop-color="#ececec"/><stop offset="1" stop-color="#c6c6c6"/></linearGradient><linearGradient id="gf16" x1="0" y1="0" x2="1" y2="1"><stop offset="0" stop-color="#ffffff"/><stop offset=".5" stop-color="#f6f6f6"/><stop offset="1" stop-color="#cccccc"/></linearGradient></defs><path d="M5.5 64.3 H50" stroke="#000" stroke-opacity=".09" stroke-width="1.4"/><path d="M5 4.5 H29.5 C33.5 4.5 32.5 11 35 14.5 C38 18.5 50.5 16 50.5 22.5 V63.5 H5 Z" fill="url(#gb16)" stroke="url(#gs16)" stroke-width="1"/><path d="M29.5 4.5 C34.5 8 33.5 17 35.5 19.5 C38 21 46.5 18.5 50.5 22.5 C49 17 39.5 12.5 29.5 4.5 Z" fill="url(#gf16)" stroke="#d6d6d6" stroke-width=".6"/><path d="M36 19.8 C40 21 45.5 19.5 49.8 22.6" fill="none" stroke="#9a9a9a" stroke-opacity=".5" stroke-width="1.1"/></svg></div><div class="lb"><span>sk_SK.mo</span></div></div>
<div class="it" style="left:518.5px;top:407px"><div class="ic"><svg class="doc" width="56" height="70" viewBox="0 0 56 70"><defs><linearGradient id="gb17" x1="0" y1="0" x2="0" y2="1"><stop offset="0" stop-color="#e0e0e0"/><stop offset=".5" stop-color="#ededed"/><stop offset="1" stop-color="#f9f9f9"/></linearGradient><linearGradient id="gf17" x1="0" y1="0" x2="1" y2="1"><stop offset="0" stop-color="#ffffff"/><stop offset=".5" stop-color="#f2f2f2"/><stop offset="1" stop-color="#b4b4b4"/></linearGradient></defs><path d="M6 65 H50" stroke="#000" stroke-opacity=".13" stroke-width="1.4"/><path d="M5.5 4.5 H34.5 C38 4.5 37 10.5 39 13.5 C41.5 17 50.5 15 50.5 20.5 V64 H5.5 Z" fill="url(#gb17)" stroke="#d2d2d2" stroke-width="1"/><path d="M34.5 4.5 C39 8 37.8 15.5 39.5 17.8 C42 19 47.5 17 50.5 20.5 C49 15.5 44 11.5 34.5 4.5 Z" fill="url(#gf17)" stroke="#c8c8c8" stroke-width=".6"/><path d="M39.5 18.2 C43 19.5 47.5 17.4 50.4 20.9 L50.4 23 C47.5 20.2 43 21.6 39.5 18.2Z" fill="#6e6e6e" opacity=".5"/><text transform="translate(12,31.3) scale(1.17,1)" font-family="'Liberation Serif','Noto Serif CJK SC',serif" font-weight="bold" font-size="12.8" fill="#6d5e8c">和</text><text x="14.2" y="52" font-family="'Liberation Serif',serif" font-size="18" fill="#db8c97">À</text><text x="28.3" y="46.8" font-family="'Liberation Serif',serif" font-size="16.2" fill="#3c78a6">Ю</text></svg></div><div class="lb"><span>sk_SK.po</span></div></div>
<div class="it" style="left:667px;top:407px"><div class="ic"><svg class="doc bl" width="56" height="70" viewBox="0 0 56 70"><defs><linearGradient id="gb18" x1="0" y1="0" x2="0" y2="1"><stop offset="0" stop-color="#e9e9e9"/><stop offset=".22" stop-color="#fcfcfc"/><stop offset="1" stop-color="#ffffff"/></linearGradient><linearGradient id="gs18" x1="0" y1="0" x2="0" y2="1"><stop offset="0" stop-color="#d8d8d8"/><stop offset=".12" stop-color="#eeeeee"/><stop offset=".93" stop-color="#ececec"/><stop offset="1" stop-color="#c6c6c6"/></linearGradient><linearGradient id="gf18" x1="0" y1="0" x2="1" y2="1"><stop offset="0" stop-color="#ffffff"/><stop offset=".5" stop-color="#f6f6f6"/><stop offset="1" stop-color="#cccccc"/></linearGradient></defs><path d="M5.5 64.3 H50" stroke="#000" stroke-opacity=".09" stroke-width="1.4"/><path d="M5 4.5 H29.5 C33.5 4.5 32.5 11 35 14.5 C38 18.5 50.5 16 50.5 22.5 V63.5 H5 Z" fill="url(#gb18)" stroke="url(#gs18)" stroke-width="1"/><path d="M29.5 4.5 C34.5 8 33.5 17 35.5 19.5 C38 21 46.5 18.5 50.5 22.5 C49 17 39.5 12.5 29.5 4.5 Z" fill="url(#gf18)" stroke="#d6d6d6" stroke-width=".6"/><path d="M36 19.8 C40 21 45.5 19.5 49.8 22.6" fill="none" stroke="#9a9a9a" stroke-opacity=".5" stroke-width="1.1"/></svg></div><div class="lb"><span>sv_SE.mo</span></div></div>
<div class="it" style="left:815.6px;top:407px"><div class="ic"><svg class="doc" width="56" height="70" viewBox="0 0 56 70"><defs><linearGradient id="gb19" x1="0" y1="0" x2="0" y2="1"><stop offset="0" stop-color="#e0e0e0"/><stop offset=".5" stop-color="#ededed"/><stop offset="1" stop-color="#f9f9f9"/></linearGradient><linearGradient id="gf19" x1="0" y1="0" x2="1" y2="1"><stop offset="0" stop-color="#ffffff"/><stop offset=".5" stop-color="#f2f2f2"/><stop offset="1" stop-color="#b4b4b4"/></linearGradient></defs><path d="M6 65 H50" stroke="#000" stroke-opacity=".13" stroke-width="1.4"/><path d="M5.5 4.5 H34.5 C38 4.5 37 10.5 39 13.5 C41.5 17 50.5 15 50.5 20.5 V64 H5.5 Z" fill="url(#gb19)" stroke="#d2d2d2" stroke-width="1"/><path d="M34.5 4.5 C39 8 37.8 15.5 39.5 17.8 C42 19 47.5 17 50.5 20.5 C49 15.5 44 11.5 34.5 4.5 Z" fill="url(#gf19)" stroke="#c8c8c8" stroke-width=".6"/><path d="M39.5 18.2 C43 19.5 47.5 17.4 50.4 20.9 L50.4 23 C47.5 20.2 43 21.6 39.5 18.2Z" fill="#6e6e6e" opacity=".5"/><text transform="translate(12,31.3) scale(1.17,1)" font-family="'Liberation Serif','Noto Serif CJK SC',serif" font-weight="bold" font-size="12.8" fill="#6d5e8c">和</text><text x="14.2" y="52" font-family="'Liberation Serif',serif" font-size="18" fill="#db8c97">À</text><text x="28.3" y="46.8" font-family="'Liberation Serif',serif" font-size="16.2" fill="#3c78a6">Ю</text></svg></div><div class="lb"><span>sv_SE.po</span></div></div>
<div class="it" style="left:221.39999999999998px;top:521px"><div class="ic"><svg class="doc bl" width="56" height="70" viewBox="0 0 56 70"><defs><linearGradient id="gb20" x1="0" y1="0" x2="0" y2="1"><stop offset="0" stop-color="#e9e9e9"/><stop offset=".22" stop-color="#fcfcfc"/><stop offset="1" stop-color="#ffffff"/></linearGradient><linearGradient id="gs20" x1="0" y1="0" x2="0" y2="1"><stop offset="0" stop-color="#d8d8d8"/><stop offset=".12" stop-color="#eeeeee"/><stop offset=".93" stop-color="#ececec"/><stop offset="1" stop-color="#c6c6c6"/></linearGradient><linearGradient id="gf20" x1="0" y1="0" x2="1" y2="1"><stop offset="0" stop-color="#ffffff"/><stop offset=".5" stop-color="#f6f6f6"/><stop offset="1" stop-color="#cccccc"/></linearGradient></defs><path d="M5.5 64.3 H50" stroke="#000" stroke-opacity=".09" stroke-width="1.4"/><path d="M5 4.5 H29.5 C33.5 4.5 32.5 11 35 14.5 C38 18.5 50.5 16 50.5 22.5 V63.5 H5 Z" fill="url(#gb20)" stroke="url(#gs20)" stroke-width="1"/><path d="M29.5 4.5 C34.5 8 33.5 17 35.5 19.5 C38 21 46.5 18.5 50.5 22.5 C49 17 39.5 12.5 29.5 4.5 Z" fill="url(#gf20)" stroke="#d6d6d6" stroke-width=".6"/><path d="M36 19.8 C40 21 45.5 19.5 49.8 22.6" fill="none" stroke="#9a9a9a" stroke-opacity=".5" stroke-width="1.1"/></svg></div><div class="lb"><span>tr_TR.mo</span></div></div>
<div class="it" style="left:369.9px;top:521px"><div class="ic"><svg class="doc" width="56" height="70" viewBox="0 0 56 70"><defs><linearGradient id="gb21" x1="0" y1="0" x2="0" y2="1"><stop offset="0" stop-color="#e0e0e0"/><stop offset=".5" stop-color="#ededed"/><stop offset="1" stop-color="#f9f9f9"/></linearGradient><linearGradient id="gf21" x1="0" y1="0" x2="1" y2="1"><stop offset="0" stop-color="#ffffff"/><stop offset=".5" stop-color="#f2f2f2"/><stop offset="1" stop-color="#b4b4b4"/></linearGradient></defs><path d="M6 65 H50" stroke="#000" stroke-opacity=".13" stroke-width="1.4"/><path d="M5.5 4.5 H34.5 C38 4.5 37 10.5 39 13.5 C41.5 17 50.5 15 50.5 20.5 V64 H5.5 Z" fill="url(#gb21)" stroke="#d2d2d2" stroke-width="1"/><path d="M34.5 4.5 C39 8 37.8 15.5 39.5 17.8 C42 19 47.5 17 50.5 20.5 C49 15.5 44 11.5 34.5 4.5 Z" fill="url(#gf21)" stroke="#c8c8c8" stroke-width=".6"/><path d="M39.5 18.2 C43 19.5 47.5 17.4 50.4 20.9 L50.4 23 C47.5 20.2 43 21.6 39.5 18.2Z" fill="#6e6e6e" opacity=".5"/><text transform="translate(12,31.3) scale(1.17,1)" font-family="'Liberation Serif','Noto Serif CJK SC',serif" font-weight="bold" font-size="12.8" fill="#6d5e8c">和</text><text x="14.2" y="52" font-family="'Liberation Serif',serif" font-size="18" fill="#db8c97">À</text><text x="28.3" y="46.8" font-family="'Liberation Serif',serif" font-size="16.2" fill="#3c78a6">Ю</text></svg></div><div class="lb"><span>tr_TR.po</span></div></div>
<div class="it" style="left:518.5px;top:521px"><div class="ic"><svg class="pot" width="68" height="64" viewBox="0 0 68 64"><defs><linearGradient id="pg1" x1="0" y1="0" x2="0" y2="1"><stop offset="0" stop-color="#f0f0f0"/><stop offset="1" stop-color="#fcfcfc"/></linearGradient><linearGradient id="pg2" x1="0" y1="0" x2="0" y2="1"><stop offset="0" stop-color="#e6eff8"/><stop offset=".45" stop-color="#9fc3e6"/><stop offset=".55" stop-color="#b9d4ee"/><stop offset="1" stop-color="#e9f0f7"/></linearGradient><linearGradient id="pg3" x1="0" y1="0" x2="1" y2="1"><stop offset="0" stop-color="#ffffff"/><stop offset="1" stop-color="#dcdcdc"/></linearGradient></defs><path d="M5 7.5 H62 V52 H48 L46 54 H5Z" fill="#000" opacity=".13"/><path d="M3.5 5.5 H61 V51 H3.5Z" fill="#e9e9e9" stroke="#cfcfcf" stroke-width=".8"/><path d="M1.5 3.5 H58.5 V37 L45 50.5 H1.5 Z" fill="url(#pg1)" stroke="#d2d2d2"/><path d="M58.5 37 L45 50.5 C46.5 46 46.5 41.5 45.5 38.5 C49 40 54 39.5 58.5 37Z" fill="url(#pg3)" stroke="#d0d0d0" stroke-width=".7"/><rect x="1.5" y="3.5" width="57" height="11" fill="#f5830f"/><path d="M1.5 14.5H58.5" stroke="#e2710a" stroke-width=".8"/><text x="5" y="13" font-family="'Liberation Sans',sans-serif" font-weight="bold" font-size="10.5" fill="#fff">P</text><rect x="14.5" y="18.5" width="26" height="20" rx="1.5" fill="#eef1f5" stroke="#bcc4cf"/><rect x="17" y="21" width="21" height="13" fill="url(#pg2)" stroke="#7aa2cf" stroke-width=".9"/><rect x="19.5" y="27" width="26" height="21" rx="1.5" fill="#eef1f5" stroke="#bcc4cf"/><rect x="22" y="29.5" width="21" height="13" fill="url(#pg2)" stroke="#7aa2cf" stroke-width=".9"/></svg></div><div class="lb"><span>travelify.pot</span></div></div>
<div class="it" style="left:667px;top:521px"><div class="ic"><svg class="doc bl" width="56" height="70" viewBox="0 0 56 70"><defs><linearGradient id="gb23" x1="0" y1="0" x2="0" y2="1"><stop offset="0" stop-color="#e9e9e9"/><stop offset=".22" stop-color="#fcfcfc"/><stop offset="1" stop-color="#ffffff"/></linearGradient><linearGradient id="gs23" x1="0" y1="0" x2="0" y2="1"><stop offset="0" stop-color="#d8d8d8"/><stop offset=".12" stop-color="#eeeeee"/><stop offset=".93" stop-color="#ececec"/><stop offset="1" stop-color="#c6c6c6"/></linearGradient><linearGradient id="gf23" x1="0" y1="0" x2="1" y2="1"><stop offset="0" stop-color="#ffffff"/><stop offset=".5" stop-color="#f6f6f6"/><stop offset="1" stop-color="#cccccc"/></linearGradient></defs><path d="M5.5 64.3 H50" stroke="#000" stroke-opacity=".09" stroke-width="1.4"/><path d="M5 4.5 H29.5 C33.5 4.5 32.5 11 35 14.5 C38 18.5 50.5 16 50.5 22.5 V63.5 H5 Z" fill="url(#gb23)" stroke="url(#gs23)" stroke-width="1"/><path d="M29.5 4.5 C34.5 8 33.5 17 35.5 19.5 C38 21 46.5 18.5 50.5 22.5 C49 17 39.5 12.5 29.5 4.5 Z" fill="url(#gf23)" stroke="#d6d6d6" stroke-width=".6"/><path d="M36 19.8 C40 21 45.5 19.5 49.8 22.6" fill="none" stroke="#9a9a9a" stroke-opacity=".5" stroke-width="1.1"/></svg></div><div class="lb"><span>zh_CN.mo</span></div></div>
<div class="it" style="left:815.6px;top:521px"><div class="ic"><svg class="doc" width="56" height="70" viewBox="0 0 56 70"><defs><linearGradient id="gb24" x1="0" y1="0" x2="0" y2="1"><stop offset="0" stop-color="#e0e0e0"/><stop offset=".5" stop-color="#ededed"/><stop offset="1" stop-color="#f9f9f9"/></linearGradient><linearGradient id="gf24" x1="0" y1="0" x2="1" y2="1"><stop offset="0" stop-color="#ffffff"/><stop offset=".5" stop-color="#f2f2f2"/><stop offset="1" stop-color="#b4b4b4"/></linearGradient></defs><path d="M6 65 H50" stroke="#000" stroke-opacity=".13" stroke-width="1.4"/><path d="M5.5 4.5 H34.5 C38 4.5 37 10.5 39 13.5 C41.5 17 50.5 15 50.5 20.5 V64 H5.5 Z" fill="url(#gb24)" stroke="#d2d2d2" stroke-width="1"/><path d="M34.5 4.5 C39 8 37.8 15.5 39.5 17.8 C42 19 47.5 17 50.5 20.5 C49 15.5 44 11.5 34.5 4.5 Z" fill="url(#gf24)" stroke="#c8c8c8" stroke-width=".6"/><path d="M39.5 18.2 C43 19.5 47.5 17.4 50.4 20.9 L50.4 23 C47.5 20.2 43 21.6 39.5 18.2Z" fill="#6e6e6e" opacity=".5"/><text transform="translate(12,31.3) scale(1.17,1)" font-family="'Liberation Serif','Noto Serif CJK SC',serif" font-weight="bold" font-size="12.8" fill="#6d5e8c">和</text><text x="14.2" y="52" font-family="'Liberation Serif',serif" font-size="18" fill="#db8c97">À</text><text x="28.3" y="46.8" font-family="'Liberation Serif',serif" font-size="16.2" fill="#3c78a6">Ю</text></svg></div><div class="lb"><span>zh_CN.po</span></div></div>
</div>
</body></html>
